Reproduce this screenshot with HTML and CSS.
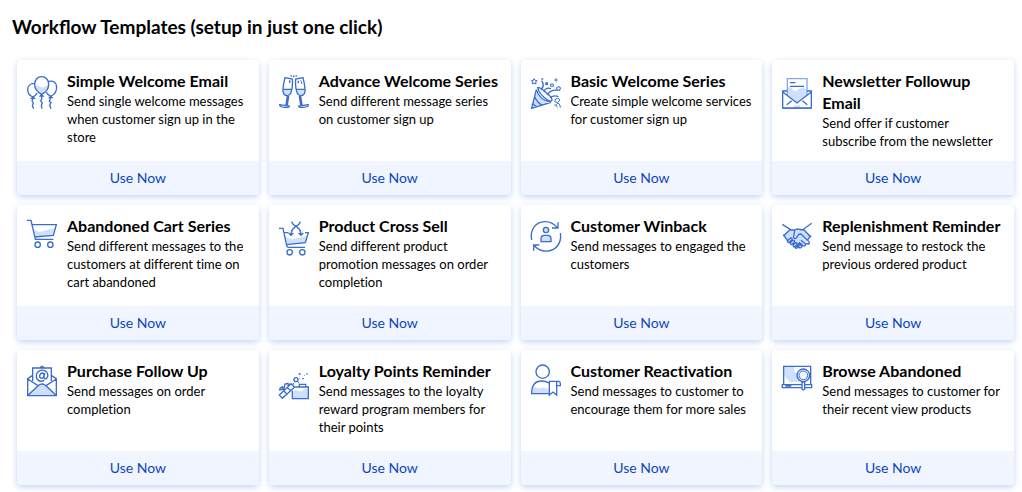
FILE: index.html
```
<!DOCTYPE html>
<html lang="en">
<head>
<meta charset="utf-8">
<title>Workflow Templates</title>
<link rel="stylesheet" href="styles.css">
</head>
<body>
<main class="page">
<h1 class="page-title">Workflow Templates (setup in just one click)</h1>
<div class="templates">

<article class="card">
<div class="card-body">
<svg class="icon" viewBox="81 210 90 120" aria-hidden="true"><path class="tint" d="M105 259q8-6 15 1t24-6q-2 20-19 29-17-7-20-24z"/><path d="M125 283c-13-6-21-19-21-31 0-13 9-22 21-22s21 9 21 22c0 12-8 25-21 31zM103 250c-12 0-20 8-20 19 0 10 6 18 16 22 6-3 10-7 12-12M147 244c14-3 23 5 23 18 0 12-7 22-18 27-6-3-10-7-13-12M121 288l4-5 4 5zM95 295l4-4 4 4zM148 293l4-4 4 4z"/><path d="M125 288v9l-3 6 5 6-3 7 2 10M99 295l-3 8 4 6-3 8 4 9M152 294l-4 9 5 5-4 8 4 10"/></svg>
<div><h2 class="card-title">Simple Welcome Email</h2><p class="card-text">Send single welcome messages when customer sign up in the store</p></div>
</div>
<button class="use" type="button">Use Now</button>
</article>

<article class="card">
<div class="card-body">
<svg class="icon" viewBox="51 60 90 120" aria-hidden="true"><path class="tint" d="M62 118h27q-1 18-14 19-14-3-13-19zM103 118h27q1 17-13 19-13-1-14-19z"/><path d="M69 83l22 4c1 16 0 26-2 33-2 13-8 17-14 17-9-1-14-9-12-21 1-10 3-22 6-33zM123 83l-22 4c-1 16 0 26 2 33 2 13 8 17 14 17 9-1 14-9 12-21-1-10-3-22-6-33zM62 118h27M103 118h27M76 138l-4 27M80 138l-4 27M116 138l4 27M112 138l4 27M53 164l29 4c0 4-5 5-14 4-11-1-16-3-15-8zM139 164l-29 4c0 4 5 5 14 4 11-1 16-3 15-8zM95 76v6M86 76l3 4M104 76l-3 4M83 91v8M109 92v8"/><path class="fine" d="M116 91l4 11"/></svg>
<div><h2 class="card-title">Advance Welcome Series</h2><p class="card-text">Send different message series on customer sign up</p></div>
</div>
<button class="use" type="button">Use Now</button>
</article>

<article class="card">
<div class="card-body">
<svg class="icon" viewBox="48 60 90 120" aria-hidden="true"><path class="tint" d="M62 122l-12 53 50-15q-28-11-38-38z"/><path d="M64 119L50 175l58-18M64 119q10 33 44 38M59 140q9 20 24 26M54 160q5 8 11 10M68 113q4 20 30 37 9 6 13 1 1-9-17-23-16-16-26-15zM78 120q12-13 2-28M86 126q5-16 22-10M96 135q12-17 30-14M105 143q12-9 25-3"/><path class="fine" d="M57 86l3 5 6 1-4 4 1 6-6-3-5 3 1-6-4-4 6-1zM131 108l2 5 5 1-4 3 1 5-5-2-4 2 1-5-4-3 5-1zM123 85v10M118 90h10M107 102h8v7h-8zM120 149l9-5 6 6-7 7-8-1zM124 164q4-9 9-2 3 6 3 11M118 165q7-2 9 7"/><circle cx="95" cy="101" r="3"/><circle cx="82" cy="87" r="1"/></svg>
<div><h2 class="card-title">Basic Welcome Series</h2><p class="card-text">Create simple welcome services for customer sign up</p></div>
</div>
<button class="use" type="button">Use Now</button>
</article>

<article class="card">
<div class="card-body">
<svg class="icon" viewBox="48 60 90 120" aria-hidden="true"><path class="tint" d="M64 113q9-5 14 3 6 10 15 7 4-9 17-9 8 0 12 5v17l-29 23-29-23zM84 166h18v8H84z"/><path class="soft" d="M64 136V86h59v50M50 175h86"/><path d="M64 123H50v51h86v-51h-13M50 126l43 33 43-33M62 164l15-12M124 164l-15-12M72 98h16M72 109h42"/></svg>
<div><h2 class="card-title">Newsletter Followup Email</h2><p class="card-text">Send offer if customer subscribe from the newsletter</p></div>
</div>
<button class="use" type="button">Use Now</button>
</article>

<article class="card">
<div class="card-body">
<svg class="icon" viewBox="39 30 90 120" aria-hidden="true"><path class="tint" d="M57 70q12 14 28 9t39-10l-5 21-58 5z"/><path d="M39 46h12l13 57h54M54 59h73l-9 32-57 5"/><circle cx="71" cy="119" r="8"/><circle cx="109" cy="119" r="8"/></svg>
<div><h2 class="card-title">Abandoned Cart Series</h2><p class="card-text">Send different messages to the customers at different time on cart abandoned</p></div>
</div>
<button class="use" type="button">Use Now</button>
</article>

<article class="card">
<div class="card-body">
<svg class="icon" viewBox="39 30 90 120" aria-hidden="true"><path class="tint" d="M57 91q12 15 29 10t38-8l-6 20-56 5z"/><path d="M39 70h12l11 52q1 5 7 5h48M54 83h13M117 83h10l-9 30-57 6M77 50q2 9 14 15 14 8 14 25M103 50q-2 9-14 15-14 8-14 25M68 84l7 7 7-7M98 84l7 7 7-7"/><circle cx="71" cy="142" r="8"/><circle cx="109" cy="142" r="8"/></svg>
<div><h2 class="card-title">Product Cross Sell</h2><p class="card-text">Send different product promotion messages on order completion</p></div>
</div>
<button class="use" type="button">Use Now</button>
</article>

<article class="card">
<div class="card-body">
<svg class="icon" viewBox="36 30 90 120" aria-hidden="true"><path class="tint" d="M66 110v-9q0-10 10-10h10q10 0 10 10v9z"/><circle class="tint" cx="81" cy="75" r="8"/><path d="M66 110v-9q0-10 10-10h10q10 0 10 10v9zM38 105C32 73 51 51 76 50q23-1 39 18M117 52v17h-18M124 84c5 29-12 51-36 54q-27 3-44-18M44 137v-17h17"/><circle cx="81" cy="75" r="8"/></svg>
<div><h2 class="card-title">Customer Winback</h2><p class="card-text">Send messages to engaged the customers</p></div>
</div>
<button class="use" type="button">Use Now</button>
</article>

<article class="card">
<div class="card-body">
<svg class="icon" viewBox="36 30 90 120" aria-hidden="true"><path class="tint" d="M40 89l22-14h38l24 15-14 20-28 20-34-20z"/><path d="M37 58l24 15-21 21M125 55l-25 18 23 24M61 75h13l7-3 19 3M74 76l-3 19q1 9 8 4l7-11 7-1 23 22q5 6-2 8l-6-2M93 106l14 12q-1 7-9 3l-11-9M84 115l12 9q-3 7-10 3l-8-6M40 89l13 18M53 107l8-8q7-2 5 5l-8 8q-5 2-5-5zM62 112l7-6q7-1 4 6l-8 7q-5 0-3-7zM70 119l6-6q7-1 4 6l-6 7q-6 0-4-7zM78 125l6-5q6 1 1 7l-6 3q-4-1-1-5zM122 91l-10 15"/></svg>
<div><h2 class="card-title">Replenishment Reminder</h2><p class="card-text">Send message to restock the previous ordered product</p></div>
</div>
<button class="use" type="button">Use Now</button>
</article>

<article class="card">
<div class="card-body">
<svg class="icon" viewBox="39 30 90 120" aria-hidden="true"><path class="tint" d="M42 136l26-25q16-16 32 0l26 25z"/><path d="M56 76L41 86v51h86V86l-15-10M56 93V54h56v39M76 54l8-5 8 5M41 87l31 20M127 87l-31 20M42 136l30-29q12-10 24 0l30 29"/><path d="M91 91q-14 7-22-4-6-14 5-23 13-8 24 2 7 11 0 19-7 5-8-4l2-12M90 76q0 9-8 9-6-1-5-8 2-8 9-8 4 1 4 7z"/></svg>
<div><h2 class="card-title">Purchase Follow Up</h2><p class="card-text">Send messages on order completion</p></div>
</div>
<button class="use" type="button">Use Now</button>
</article>

<article class="card">
<div class="card-body">
<svg class="icon" viewBox="39 30 90 120" aria-hidden="true"><path class="tint" d="M79 126q9-9 17-3 9 5 18-5 6-5 13 1v26H79z"/><path d="M79 122v24h48v-35H88M75 101L40 135l9 10 37-34zM64 113l11 9M54 123l9 10M56 117l-15 3 2-7 9-3M54 116l3-14 9-2 1 9M47 113l7 3M67 105l8-4M100 103h19v8h-19z"/><circle cx="90" cy="89" r="6"/><path class="fine" d="M101 69v6M98 72h6M111 84v4M109 86h4M123 70v3M121 72h4M83 99l-3 7M96 95l3 5M115 76h2M100 85h2"/></svg>
<div><h2 class="card-title">Loyalty Points Reminder</h2><p class="card-text">Send messages to the loyalty reward program members for their points</p></div>
</div>
<button class="use" type="button">Use Now</button>
</article>

<article class="card">
<div class="card-body">
<svg class="icon" viewBox="36 30 90 120" aria-hidden="true"><path class="tint" d="M39 130q0-14 8-19 10 7 21 2 10-3 22 6v12z"/><circle cx="71" cy="65" r="20"/><path d="M90 131H38q0-38 30-38 13 0 22 6M91 94v41l11-9 11 9V94zM91 94h29q4 1 4 7v6h-11"/></svg>
<div><h2 class="card-title">Customer Reactivation</h2><p class="card-text">Send messages to customer to encourage them for more sales</p></div>
</div>
<button class="use" type="button">Use Now</button>
</article>

<article class="card">
<div class="card-body">
<svg class="icon" viewBox="36 30 90 120" aria-hidden="true"><path class="tint" d="M43 50h30q-5 14 8 21 14 13 10 25H60Q43 84 43 70z"/><path d="M41 103V49h81v54M37 104h88v9H37zM46 108h18"/><circle class="glass" cx="100" cy="76" r="19"/><circle class="fine" cx="100" cy="76" r="13"/><path class="glass" d="M96 96h8v21q-4 5-8 0z"/></svg>
<div><h2 class="card-title">Browse Abandoned</h2><p class="card-text">Send messages to customer for their recent view products</p></div>
</div>
<button class="use" type="button">Use Now</button>
</article>

</div>
</main>
</body>
</html>
```

FILE: styles.css
```
* { box-sizing: border-box; }

body {
  margin: 0;
  background: #fff;
  color: #000;
  font-family: Lato, "Liberation Sans", sans-serif;
}

.page { padding: 14px 8px 8px 12px; }

.page-title {
  margin: 0 0 20px;
  font-size: 19px;
  line-height: 26px;
  font-weight: 700;
}

.templates {
  display: grid;
  grid-template-columns: repeat(4, minmax(0, 1fr));
  grid-auto-rows: 1fr;
  gap: 10px;
  padding-left: 5px;
}

.card {
  display: flex;
  flex-direction: column;
  overflow: hidden;
  border-radius: 4px;
  background: #fff;
  box-shadow: 0 2px 6px #c3d3f5;
  font-variant-ligatures: none;
}

.card-body {
  display: flex;
  flex: 1;
  align-items: flex-start;
  gap: 10px;
  padding: 10px 10px 11px;
}

.card-title {
  margin: 0;
  font-size: 16px;
  line-height: 22px;
  font-weight: 700;
}

.card-text {
  margin: 0;
  font-size: 13px;
  line-height: 18px;
}

.use {
  height: 34px;
  border: 0;
  padding: 0;
  background: #f1f5ff;
  color: #0c46c0;
  font: 14px/20px Lato, "Liberation Sans", sans-serif;
  cursor: pointer;
}

.icon {
  flex: none;
  width: 30px;
  height: 40px;
  fill: none;
  stroke: #3b6dcc;
  stroke-width: 4;
  overflow: visible;
}

.icon .tint { fill: #cfe0fc; stroke: none; }
.icon .soft { stroke: #87a8e4; stroke-width: 4; }
.icon .fine { stroke-width: 3; }
.icon .glass { fill: #f1f6ff; }
```
